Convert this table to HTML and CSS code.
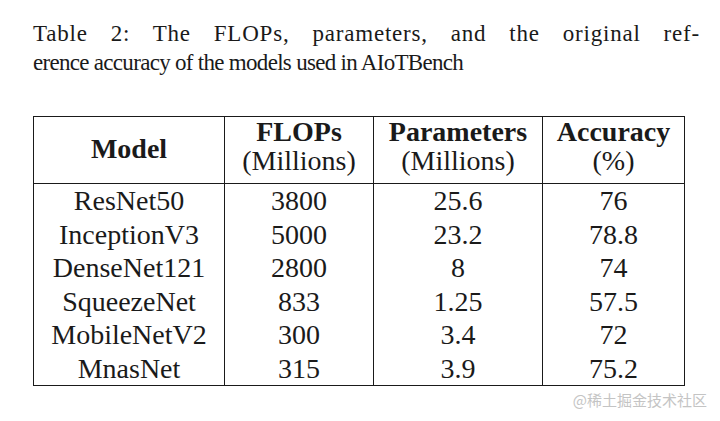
FILE: index.html
```html
<!DOCTYPE html>
<html lang="en">
<head>
    <meta charset="UTF-8">
    <meta name="viewport" content="width=device-width, initial-scale=1.0">
    <title>Table 2</title>
    <link rel="stylesheet" href="styles.css">
</head>
<body>
    <div class="page">
        <div class="caption">
            <div class="caption-line full">Table 2: The FLOPs, parameters, and the original ref-</div>
            <div class="caption-line">erence accuracy of the models used in AIoTBench</div>
        </div>

        <table class="models">
            <colgroup>
                <col class="col-model">
                <col class="col-flops">
                <col class="col-params">
                <col class="col-acc">
            </colgroup>
            <thead>
                <tr>
                    <th class="single"><b>Model</b></th>
                    <th><b>FLOPs</b><br>(Millions)</th>
                    <th><b>Parameters</b><br>(Millions)</th>
                    <th><b>Accuracy</b><br>(%)</th>
                </tr>
            </thead>
            <tbody>
                <tr><td>ResNet50</td><td>3800</td><td>25.6</td><td>76</td></tr>
                <tr><td>InceptionV3</td><td>5000</td><td>23.2</td><td>78.8</td></tr>
                <tr><td>DenseNet121</td><td>2800</td><td>8</td><td>74</td></tr>
                <tr><td>SqueezeNet</td><td>833</td><td>1.25</td><td>57.5</td></tr>
                <tr><td>MobileNetV2</td><td>300</td><td>3.4</td><td>72</td></tr>
                <tr><td>MnasNet</td><td>315</td><td>3.9</td><td>75.2</td></tr>
            </tbody>
        </table>

        <div class="watermark">@稀土掘金技术社区</div>
    </div>
</body>
</html>
```

FILE: styles.css
```css
* {
    margin: 0;
    padding: 0;
    box-sizing: border-box;
}

body {
    background: #fff;
    color: #1a1a1a;
    font-family: "Liberation Serif", "DejaVu Serif", serif;
}

.page {
    position: relative;
    width: 720px;
    height: 421px;
    padding: 19px 20px 0 33px;
}

.caption {
    font-size: 23px;
    line-height: 29px;
    letter-spacing: -0.7px;
}

.caption-line.full {
    text-align: justify;
    text-align-last: justify;
    letter-spacing: 0.8px;
}

.models {
    margin-top: 39px;
    border-collapse: collapse;
    font-size: 28px;
    text-align: center;
}

.col-model { width: 191px; }
.col-flops { width: 149px; }
.col-params { width: 169px; }
.col-acc { width: 142px; }

.models th,
.models td {
    border-left: 1.5px solid #1a1a1a;
    border-right: 1.5px solid #1a1a1a;
    padding: 0;
}

.models th {
    font-weight: normal;
    line-height: 29px;
    height: 67px;
    vertical-align: top;
    border-top: 1.5px solid #1a1a1a;
    border-bottom: 1.5px solid #1a1a1a;
}

.models th.single {
    padding-top: 17px;
}

.models td {
    line-height: 33.5px;
}

.models tbody tr:last-child td {
    border-bottom: 1.5px solid #1a1a1a;
}

.watermark {
    position: absolute;
    right: 13px;
    top: 390px;
    font-family: "Noto Sans CJK SC", sans-serif;
    font-size: 15px;
    line-height: 20px;
    color: #c4c4c4;
}
```
